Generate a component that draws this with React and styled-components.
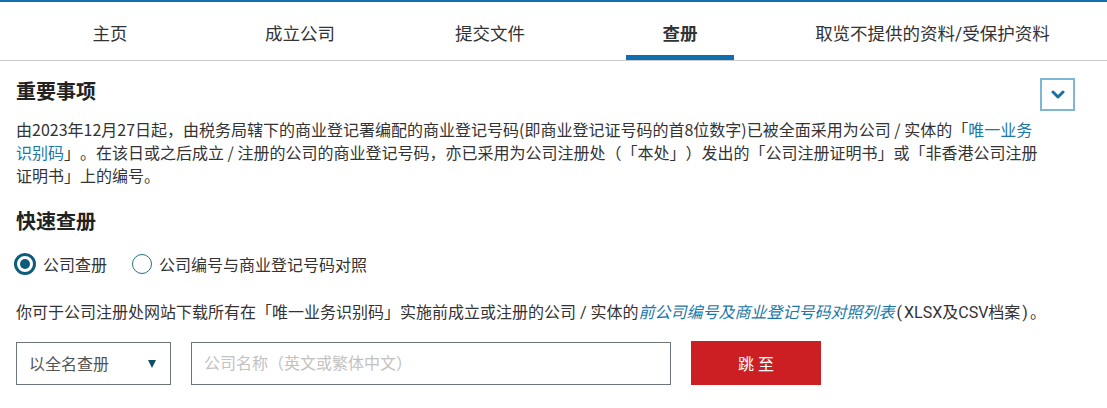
import React from "react";
import styled, { createGlobalStyle } from "styled-components";

const Global = createGlobalStyle`
  html, body { margin: 0; padding: 0; background: #fff; }
  body {
    font-family: Roboto, "Noto Sans CJK SC", sans-serif;
    color: #333;
    text-spacing-trim: space-all;
  }
  * { box-sizing: border-box; }
`;

const Page = styled.div`
  width: 1107px;
  border-top: 2px solid #1070ad;
`;

const Nav = styled.nav`
  display: flex;
  height: 59px;
  padding-left: 15px;
  border-bottom: 1px solid #c9c9d1;
`;

const Tab = styled.div`
  position: relative;
  width: ${(p) => p.$w || 190}px;
  display: flex;
  align-items: center;
  justify-content: center;
  padding-top: 3px;
  font-size: 17.5px;
  color: #333;
  font-weight: ${(p) => (p.$active ? 700 : 400)};
  &::after {
    content: "";
    display: ${(p) => (p.$active ? "block" : "none")};
    position: absolute;
    left: 50%;
    bottom: 0;
    width: 108px;
    margin-left: -54px;
    height: 5px;
    background: #1070ad;
  }
`;

const Content = styled.main`
  padding: 16px 32px 0 16px;
`;

const HeadRow = styled.div`
  display: flex;
  justify-content: space-between;
  align-items: flex-start;
`;

const Heading = styled.h2`
  margin: 1px 0 0;
  font-size: 20px;
  line-height: 28px;
  font-weight: 700;
  color: #222;
`;

const ToggleBtn = styled.button`
  width: 35px;
  height: 33px;
  margin-top: 1px;
  border: 2px solid #7db6d9;
  background: #fff;
  display: flex;
  align-items: center;
  justify-content: center;
  padding: 0;
`;

const Para = styled.p`
  margin: 7px 0 0;
  width: 1022px;
  font-family: "Noto Sans CJK SC", sans-serif;
  font-size: 16px;
  line-height: 23px;
  color: #333;
`;

const Link = styled.span`
  color: #1b77a8;
  font-style: ${(p) => (p.$italic ? "italic" : "normal")};
`;

const SubHeading = styled(Heading)`
  margin-top: 21px;
`;

const RadioRow = styled.div`
  display: flex;
  align-items: center;
  margin-top: 16px;
  height: 24px;
`;

const RadioItem = styled.label`
  display: flex;
  align-items: center;
  gap: 7px;
  margin-right: 25px;
  margin-left: ${(p) => (p.$first ? "-2px" : "0")};
  font-size: 16px;
  color: #333;
`;

const RadioCircle = styled.span`
  width: ${(p) => (p.$checked ? 22 : 20)}px;
  height: ${(p) => (p.$checked ? 22 : 20)}px;
  border-radius: 50%;
  border: ${(p) => (p.$checked ? "3px solid #0d5c78" : "1.5px solid #2d6d84")};
  display: flex;
  align-items: center;
  justify-content: center;
  &::after {
    content: "";
    display: ${(p) => (p.$checked ? "block" : "none")};
    width: 10px;
    height: 10px;
    border-radius: 50%;
    background: #0d5c78;
  }
`;

const Note = styled.p`
  margin: 25px 0 0;
  font-size: 16px;
  line-height: 23px;
  color: #333;
  white-space: nowrap;
`;

const Paren = styled.span`
  margin: 0 2px;
`;

const FormRow = styled.div`
  display: flex;
  align-items: center;
  margin-top: 17px;
  gap: 20px;
`;

const Select = styled.div`
  width: 155px;
  height: 43px;
  border: 1px solid #6e767d;
  display: flex;
  align-items: center;
  justify-content: space-between;
  padding: 0 14px 0 12px;
  font-size: 16px;
  color: #555;
`;

const Caret = styled.span`
  width: 0;
  height: 0;
  border-left: 4.5px solid transparent;
  border-right: 4.5px solid transparent;
  border-top: 8px solid #0d4f66;
  margin-top: 2px;
`;

const Input = styled.input`
  width: 480px;
  height: 43px;
  border: 1px solid #6e767d;
  padding: 0 12px;
  font-family: inherit;
  font-size: 16px;
  color: #333;
  outline: none;
  &::placeholder { color: #c2c2c2; }
`;

const GoBtn = styled.button`
  width: 130px;
  height: 44px;
  border: none;
  background: #cc1f24;
  color: #fff;
  font-family: inherit;
  font-size: 16px;
`;

export default function App() {
  return (
    <>
      <Global />
      <Page>
        <Nav>
          <Tab>主页</Tab>
          <Tab>成立公司</Tab>
          <Tab>提交文件</Tab>
          <Tab $active>查册</Tab>
          <Tab $w={315}>取览不提供的资料/受保护资料</Tab>
        </Nav>
        <Content>
          <HeadRow>
            <Heading>重要事项</Heading>
            <ToggleBtn aria-label="toggle">
              <svg width="14" height="10" viewBox="0 0 14 10">
                <polyline points="2,2 7,7 12,2" fill="none" stroke="#1a6fa5" strokeWidth="3" strokeLinecap="round" strokeLinejoin="round" />
              </svg>
            </ToggleBtn>
          </HeadRow>
          <Para>
            由2023年12月27日起，由税务局辖下的商业登记署编配的商业登记号码(即商业登记证号码的首8位数字)已被全面采用为公司 / 实体的「<Link>唯一业务识别码</Link>」。在该日或之后成立 / 注册的公司的商业登记号码，亦已采用为公司注册处（「本处」）发出的「公司注册证明书」或「非香港公司注册证明书」上的编号。
          </Para>
          <SubHeading>快速查册</SubHeading>
          <RadioRow>
            <RadioItem $first>
              <RadioCircle $checked />
              公司查册
            </RadioItem>
            <RadioItem>
              <RadioCircle />
              公司编号与商业登记号码对照
            </RadioItem>
          </RadioRow>
          <Note>
            你可于公司注册处网站下载所有在「唯一业务识别码」实施前成立或注册的公司 / 实体的<Link $italic>前公司编号及商业登记号码对照列表</Link><Paren>(</Paren>XLSX及CSV档案<Paren>)</Paren>。
          </Note>
          <FormRow>
            <Select>
              以全名查册
              <Caret />
            </Select>
            <Input placeholder="公司名称（英文或繁体中文）" />
            <GoBtn>跳 至</GoBtn>
          </FormRow>
        </Content>
      </Page>
    </>
  );
}
